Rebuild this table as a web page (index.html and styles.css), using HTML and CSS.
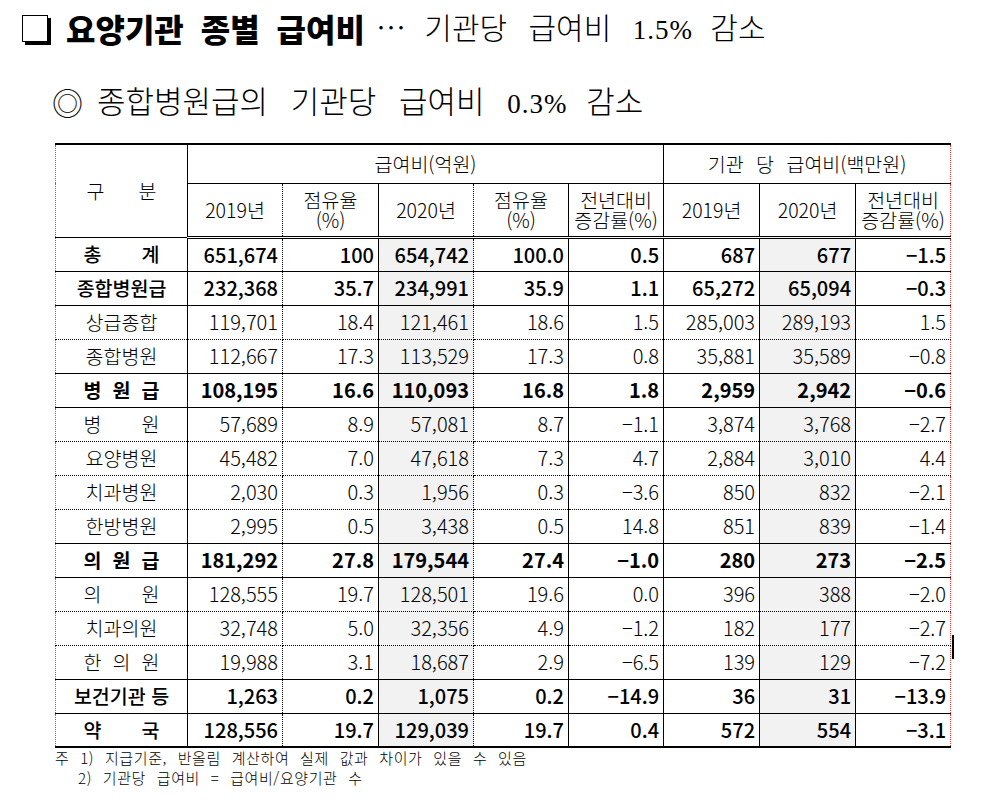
FILE: index.html
```html
<!DOCTYPE html>
<html lang="ko">
<head>
<meta charset="utf-8">
<title>요양기관 종별 급여비</title>
<link rel="stylesheet" href="styles.css">
</head>
<body>
<div class="page">
  <h1 class="title"><span class="sqbox"></span><span class="title-bold">요양기관 종별 급여비</span><span class="title-light"><span class="ell">…</span> 기관당 급여비 <span class="num">1.5%</span> 감소</span></h1>
  <h2 class="subtitle"><span class="dbl">◎</span><span class="sub-text">종합병원급의 기관당 급여비 <span class="num">0.3%</span> 감소</span></h2>
  <div class="table-wrap">
    <table class="stats">
      <colgroup>
        <col class="w-lbl"><col class="w95"><col class="w96"><col class="w95"><col class="w95"><col class="w95"><col class="w96"><col class="w96"><col class="w95">
      </colgroup>
      <thead>
        <tr class="hr1">
          <th rowspan="2" class="gubun"><span class="sp gsp">구 분</span></th>
          <th colspan="5" class="b-solid">급여비(억원)</th>
          <th colspan="3" class="b-last">기관 당 급여비(백만원)</th>
        </tr>
        <tr class="hr2">
          <th class="b-dot">2019년</th>
          <th class="b-solid two">점유율<br>(%)</th>
          <th class="b-dot">2020년</th>
          <th class="b-solid two">점유율<br>(%)</th>
          <th class="b-solid two">전년대비<br>증감률(%)</th>
          <th class="b-solid">2019년</th>
          <th class="b-solid">2020년</th>
          <th class="b-last two">전년대비<br>증감률(%)</th>
        </tr>
      </thead>
      <tbody>
        <tr class="grp solid"><td><span class="sp">총 계</span></td><td>651,674</td><td>100</td><td>654,742</td><td>100.0</td><td>0.5</td><td>687</td><td>677</td><td>−1.5</td></tr>
        <tr class="grp solid"><td>종합병원급</td><td>232,368</td><td>35.7</td><td>234,991</td><td>35.9</td><td>1.1</td><td>65,272</td><td>65,094</td><td>−0.3</td></tr>
        <tr class="sub dot"><td>상급종합</td><td>119,701</td><td>18.4</td><td>121,461</td><td>18.6</td><td>1.5</td><td>285,003</td><td>289,193</td><td>1.5</td></tr>
        <tr class="sub solid"><td>종합병원</td><td>112,667</td><td>17.3</td><td>113,529</td><td>17.3</td><td>0.8</td><td>35,881</td><td>35,589</td><td>−0.8</td></tr>
        <tr class="grp strong solid"><td><span class="sp">병 원 급</span></td><td>108,195</td><td>16.6</td><td>110,093</td><td>16.8</td><td>1.8</td><td>2,959</td><td>2,942</td><td>−0.6</td></tr>
        <tr class="sub dot"><td><span class="sp">병 원</span></td><td>57,689</td><td>8.9</td><td>57,081</td><td>8.7</td><td>−1.1</td><td>3,874</td><td>3,768</td><td>−2.7</td></tr>
        <tr class="sub dot"><td>요양병원</td><td>45,482</td><td>7.0</td><td>47,618</td><td>7.3</td><td>4.7</td><td>2,884</td><td>3,010</td><td>4.4</td></tr>
        <tr class="sub dot"><td>치과병원</td><td>2,030</td><td>0.3</td><td>1,956</td><td>0.3</td><td>−3.6</td><td>850</td><td>832</td><td>−2.1</td></tr>
        <tr class="sub solid"><td>한방병원</td><td>2,995</td><td>0.5</td><td>3,438</td><td>0.5</td><td>14.8</td><td>851</td><td>839</td><td>−1.4</td></tr>
        <tr class="grp strong solid"><td><span class="sp">의 원 급</span></td><td>181,292</td><td>27.8</td><td>179,544</td><td>27.4</td><td>−1.0</td><td>280</td><td>273</td><td>−2.5</td></tr>
        <tr class="sub dot"><td><span class="sp">의 원</span></td><td>128,555</td><td>19.7</td><td>128,501</td><td>19.6</td><td>0.0</td><td>396</td><td>388</td><td>−2.0</td></tr>
        <tr class="sub dot"><td>치과의원</td><td>32,748</td><td>5.0</td><td>32,356</td><td>4.9</td><td>−1.2</td><td>182</td><td>177</td><td>−2.7</td></tr>
        <tr class="sub solid"><td><span class="sp">한 의 원</span></td><td>19,988</td><td>3.1</td><td>18,687</td><td>2.9</td><td>−6.5</td><td>139</td><td>129</td><td>−7.2</td></tr>
        <tr class="grp solid"><td>보건기관 등</td><td>1,263</td><td>0.2</td><td>1,075</td><td>0.2</td><td>−14.9</td><td>36</td><td>31</td><td>−13.9</td></tr>
        <tr class="grp last"><td><span class="sp">약 국</span></td><td>128,556</td><td>19.7</td><td>129,039</td><td>19.7</td><td>0.4</td><td>572</td><td>554</td><td>−3.1</td></tr>
      </tbody>
    </table>
    <span class="caret"></span>
  </div>
  <div class="notes">
    <p>주 1) 지급기준, 반올림 계산하여 실제 값과 차이가 있을 수 있음</p>
    <p class="indent">2) 기관당 급여비 = 급여비/요양기관 수</p>
  </div>
</div>
</body>
</html>
```

FILE: styles.css
```css
* { box-sizing: border-box; }
html, body { margin: 0; padding: 0; background: #fff; }
body {
  font-family: "Noto Sans CJK KR", "Noto Sans", sans-serif;
  color: #000;
}
.page { width: 998px; padding-top: 8px; }

/* title */
.title {
  display: flex;
  align-items: center;
  height: 40px;
  margin: 0 0 0 22px;
  line-height: 40px;
  font-weight: 400;
  white-space: pre;
}
.sqbox {
  display: inline-block;
  width: 26px;
  height: 27px;
  border: 1px solid #000;
  box-shadow: 3px 3px 0 #000;
  margin-right: 18px;
  flex: none;
}
.title-bold {
  font-size: 32px;
  font-weight: 900;
  word-spacing: 8px;
  margin-right: 11px;
}
.title-light {
  font-size: 30px;
  font-weight: 300;
  word-spacing: 13px;
}
.ell { letter-spacing: -3px; }
.num {
  font-family: "Liberation Serif", serif;
  font-size: 27px;
  letter-spacing: 1px;
  word-spacing: 0;
  margin-right: -4px;
}

.subtitle {
  display: flex;
  align-items: center;
  height: 40px;
  margin: 34px 0 0 52px;
  font-size: 31px;
  line-height: 40px;
  font-weight: 300;
  white-space: pre;
}
.dbl { margin-right: 14px; }
.sub-text { word-spacing: 14px; }

/* table */
.table-wrap {
  position: relative;
  margin: 21px 0 0 55px;
  width: 896px;
}
.stats {
  border-collapse: collapse;
  table-layout: fixed;
  width: 896px;
  border-top: 2px solid #000;
  border-bottom: 2px solid #000;
}
.w-lbl { width: 132px; }
.w95 { width: 95px; }
.w96 { width: 96px; }

.stats th {
  font-size: 19.5px;
  font-weight: 300;
  line-height: 20px;
  padding: 0;
  text-align: center;
  vertical-align: middle;
  word-spacing: 7px;
}
.hr1 { height: 39px; }
.hr1 th { border-bottom: 1px solid #000; }
.hr2 { height: 54px; }
.hr2 th { border-bottom: 3px double #000; }
.gubun {
  border-right: 1px solid #000;
  border-left: 1px dotted #f33;
  border-bottom: 3px double #000;
}
.b-solid { border-right: 1px solid #000; }
.b-dot { border-right: 1px dotted #000; }
.b-last { border-right: 1px dotted #f33; }
.two { word-spacing: 0; }

.sp {
  display: inline-block;
  width: 76px;
  text-align: justify;
  text-align-last: justify;
  word-spacing: 0;
}
.gsp { width: 70px; }

.stats td {
  height: 34px;
  padding: 0 4px 0 0;
  font-size: 20px;
  line-height: 24px;
  text-align: right;
  vertical-align: middle;
  font-weight: 300;
  font-variant-numeric: tabular-nums;
  white-space: nowrap;
}
.stats td:nth-child(1) {
  text-align: center;
  padding: 0;
  font-size: 19.5px;
  border-left: 1px dotted #f33;
  border-right: 1px solid #000;
}
.stats td:nth-child(2) { border-right: 1px dotted #000; }
.stats td:nth-child(3) { border-right: 1px solid #000; }
.stats td:nth-child(4) { border-right: 1px dotted #000; background: #f2f2f2; }
.stats td:nth-child(5),
.stats td:nth-child(6),
.stats td:nth-child(7) { border-right: 1px solid #000; }
.stats td:nth-child(8) { border-right: 1px solid #000; background: #f2f2f2; }
.stats td:nth-child(9) { border-right: 1px dotted #f33; }

.stats tr.solid td { border-bottom: 1px solid #000; }
.stats tr.dot td { border-bottom: 1px dotted #000; }
.stats tr.grp td { font-weight: 500; }
.stats tr.strong td { font-weight: 700; }

.caret {
  position: absolute;
  left: 897px;
  top: 492px;
  width: 2px;
  height: 24px;
  background: #000;
}

/* notes */
.notes {
  margin: 0 0 0 55px;
  font-size: 15px;
  font-weight: 300;
  line-height: 20px;
  letter-spacing: 0.6px;
  word-spacing: 6px;
}
.notes p { margin: 0; white-space: pre; }
.notes .indent { padding-left: 23px; }
```
